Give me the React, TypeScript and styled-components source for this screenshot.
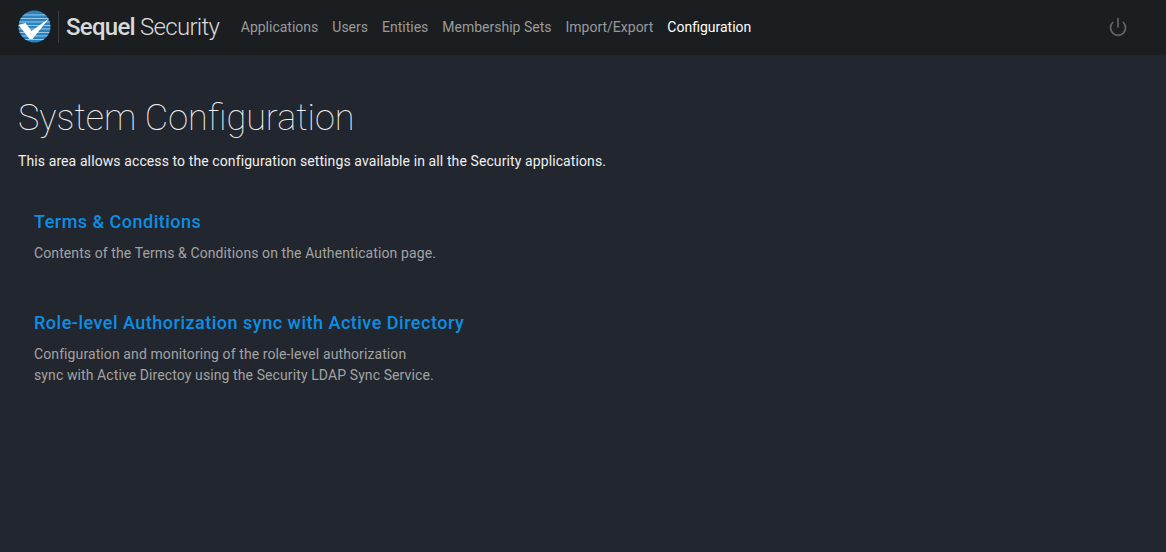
import React from 'react';
import styled, { createGlobalStyle } from 'styled-components';
import { Power } from 'lucide-react';

const GlobalStyle = createGlobalStyle`
  html, body {
    margin: 0;
    height: 100%;
    background: #22262e;
    font-family: Roboto, "Liberation Sans", sans-serif;
    font-size: 14px;
  }
`;

const Navbar = styled.header`
  height: 55px;
  background: #1a1e21;
  display: flex;
  align-items: center;
  padding: 0 38px 2px 18px;
  box-sizing: border-box;
`;

const Brand = styled.div`
  display: flex;
  align-items: center;
  margin-right: 21.6px;
`;

const Divider = styled.span`
  width: 1px;
  height: 32px;
  margin: 0 7px 0 7px;
  background: #3a3e42;
`;

const BrandName = styled.div`
  font-size: 24px;
  letter-spacing: -0.72px;
  color: #d9d9d9;
  font-weight: 300;
  white-space: nowrap;

  b {
    font-weight: 500;
  }
`;

const NavLinks = styled.nav`
  display: flex;
  gap: 14px;
  flex: 1;
`;

const NavLink = styled.a<{ $active?: boolean }>`
  font-size: 14px;
  color: ${(p) => (p.$active ? '#ffffff' : '#9a9a9a')};
  white-space: nowrap;
`;

const PowerButton = styled.span`
  display: flex;
  color: #62686a;
`;

const Main = styled.main`
  padding: 42px 18px 0;
`;

const Title = styled.h1`
  margin: 0;
  font-size: 36px;
  line-height: 42px;
  font-weight: 100;
  color: #f2f2f2;
`;

const Lead = styled.p`
  margin: 12px 0 0;
  font-size: 14px;
  line-height: 21px;
  letter-spacing: 0.1px;
  color: #f0f0f0;
`;

const Sections = styled.div`
  padding: 0 16px;
  margin-top: 38px;
  display: flex;
  flex-direction: column;
  gap: 47px;
`;

const Section = styled.section``;

const SectionTitle = styled.a`
  display: block;
  font-size: 18px;
  line-height: 24px;
  font-weight: 500;
  letter-spacing: 0.5px;
  color: #0b8fe6;
`;

const SectionText = styled.p`
  margin: 9px 0 0;
  font-size: 14px;
  line-height: 21px;
  letter-spacing: 0.1px;
  color: #a3a3a3;
`;

function Logo() {
  return (
    <svg width="33" height="33" viewBox="0 0 33 33">
      <defs>
        <clipPath id="disc">
          <circle cx="16.5" cy="16.5" r="16" />
        </clipPath>
      </defs>
      <g clipPath="url(#disc)">
        <rect width="33" height="33" fill="#2a83bf" />
        {[4.5, 8, 11.5, 15, 18.5, 22, 25.5, 29].map((y) => (
          <rect key={y} x="0" y={y} width="33" height="0.9" fill="#a9d0ea" />
        ))}
      </g>
      <path d="M0.5 15 L7.5 13 L13.5 21 L31 8.5 L14.5 29 L11.5 29 Z" fill="#ffffff" />
    </svg>
  );
}

const links = ['Applications', 'Users', 'Entities', 'Membership Sets', 'Import/Export'];

export default function App() {
  return (
    <>
      <GlobalStyle />
      <Navbar>
        <Brand>
          <Logo />
          <Divider />
          <BrandName>
            <b>Sequel</b> Security
          </BrandName>
        </Brand>
        <NavLinks>
          {links.map((l) => (
            <NavLink key={l}>{l}</NavLink>
          ))}
          <NavLink $active>Configuration</NavLink>
        </NavLinks>
        <PowerButton>
          <Power size={20} strokeWidth={2} />
        </PowerButton>
      </Navbar>
      <Main>
        <Title>System Configuration</Title>
        <Lead>This area allows access to the configuration settings available in all the Security applications.</Lead>
        <Sections>
          <Section>
            <SectionTitle>Terms &amp; Conditions</SectionTitle>
            <SectionText>Contents of the Terms &amp; Conditions on the Authentication page.</SectionText>
          </Section>
          <Section>
            <SectionTitle>Role-level Authorization sync with Active Directory</SectionTitle>
            <SectionText>
              Configuration and monitoring of the role-level authorization
              <br />
              sync with Active Directoy using the Security LDAP Sync Service.
            </SectionText>
          </Section>
        </Sections>
      </Main>
    </>
  );
}
